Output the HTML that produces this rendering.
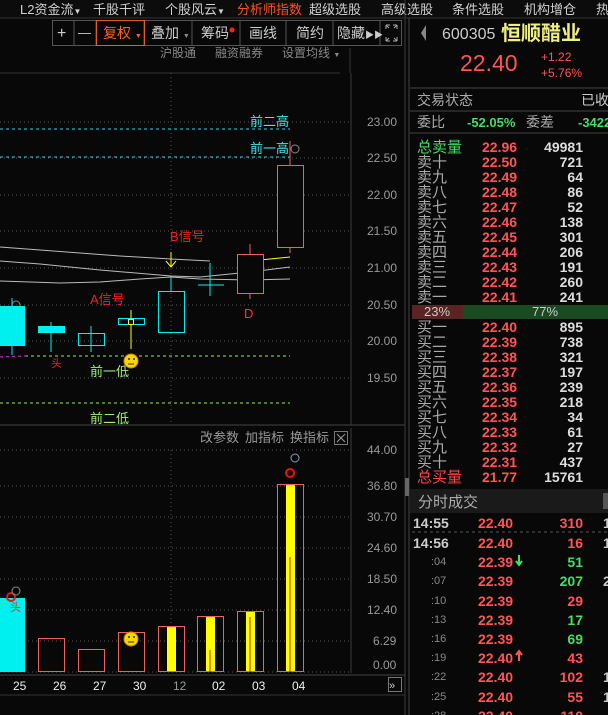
<!DOCTYPE html>
<html><head><meta charset="utf-8"><style>
html,body{margin:0;padding:0;background:#080808;width:608px;height:715px;overflow:hidden}
svg{display:block;font-family:"Liberation Sans","Noto Sans CJK SC",sans-serif}
</style></head><body>
<svg width="608" height="715" viewBox="0 0 608 715" xmlns="http://www.w3.org/2000/svg">
<rect width="608" height="715" fill="#080808"/>
<rect width="608" height="18" fill="#0c0c0c"/>
<line x1="0" y1="18" x2="608" y2="18" stroke="#333"/>
<g font-size="13" fill="#d0d0d0">
<text x="20" y="14">L2资金流<tspan font-size="8">▼</tspan></text>
<text x="93" y="14">千股千评</text>
<text x="165" y="14">个股风云<tspan font-size="8">▼</tspan></text>
<text x="237" y="14" fill="#ff5020">分析师指数</text>
<text x="309" y="14">超级选股</text>
<text x="381" y="14">高级选股</text>
<text x="452" y="14">条件选股</text>
<text x="524" y="14">机构增仓</text>
<text x="596" y="14">热</text>
</g>
<g stroke="#555" fill="none">
<rect x="52.5" y="20.5" width="349" height="25"/>
<line x1="74" y1="20" x2="74" y2="46"/><line x1="96" y1="20" x2="96" y2="46"/>
<line x1="144" y1="20" x2="144" y2="46"/><line x1="192" y1="20" x2="192" y2="46"/>
<line x1="240" y1="20" x2="240" y2="46"/><line x1="286" y1="20" x2="286" y2="46"/>
<line x1="333" y1="20" x2="333" y2="46"/><line x1="380" y1="20" x2="380" y2="46"/>
</g>
<rect x="96.5" y="20.5" width="48" height="25" fill="none" stroke="#e06020"/>
<g font-size="14" fill="#ccc">
<text x="57" y="38" font-size="16">+</text>
<text x="78" y="37" font-size="13">—</text>
<text x="103" y="38" fill="#ff6020">复权 <tspan font-size="7">▼</tspan></text>
<text x="151" y="38">叠加 <tspan font-size="7" fill="#888">▼</tspan></text>
<text x="201" y="38">筹码</text><circle cx="232" cy="30" r="2.5" fill="#f22"/>
<text x="249" y="38">画线</text>
<text x="296" y="38">简约</text>
<text x="337" y="38">隐藏<tspan font-size="9">▶▶</tspan></text>
</g>
<path d="M386 25h4M386 25v4M397 25h-4M397 25v4M386 41h4M386 41v-4M397 41h-4M397 41v-4M386 25l3 3M397 25l-3 3M386 41l3-3M397 41l-3-3" stroke="#aaa" fill="none"/>
<g font-size="12" fill="#888">
<text x="160" y="57">沪股通</text><text x="215" y="57">融资融券</text><text x="282" y="57">设置均线 <tspan font-size="7">▼</tspan></text>
</g>
<line x1="0" y1="73" x2="340" y2="73" stroke="#333"/>
<line x1="350" y1="48" x2="350" y2="73" stroke="#333"/>

<line x1="351" y1="73" x2="351" y2="425" stroke="#3a3a3a"/>
<line x1="405" y1="0" x2="405" y2="715" stroke="#3a3a3a"/>
<line x1="409" y1="18" x2="409" y2="715" stroke="#444"/>
<g stroke="#555" stroke-dasharray="1,3">
<line x1="0" y1="122" x2="351" y2="122"/><line x1="0" y1="158" x2="351" y2="158"/>
<line x1="0" y1="195" x2="351" y2="195"/><line x1="0" y1="231" x2="351" y2="231"/>
<line x1="0" y1="268" x2="351" y2="268"/><line x1="0" y1="305" x2="351" y2="305"/>
<line x1="0" y1="341" x2="351" y2="341"/><line x1="0" y1="378" x2="351" y2="378"/>
<line x1="171" y1="73" x2="171" y2="425"/>
</g>
<g font-size="12" fill="#999">
<text x="367" y="126">23.00</text><text x="367" y="162">22.50</text><text x="367" y="199">22.00</text>
<text x="367" y="235">21.50</text><text x="367" y="272">21.00</text><text x="367" y="309">20.50</text>
<text x="367" y="345">20.00</text><text x="367" y="382">19.50</text>
</g>
<g stroke-dasharray="3,3">
<line x1="0" y1="129" x2="290" y2="129" stroke="#30d0e0"/>
<line x1="0" y1="157" x2="290" y2="157" stroke="#30d0e0"/>
<line x1="25" y1="356" x2="290" y2="356" stroke="#90f060"/>
<line x1="0" y1="403" x2="290" y2="403" stroke="#90f060"/>
<line x1="0" y1="357" x2="26" y2="356" stroke="#e030e0"/>
</g>
<g font-size="13">
<text x="250" y="126" fill="#40e8f0">前二高</text>
<text x="250" y="153" fill="#40e8f0">前一高</text>
<text x="90" y="376" fill="#a0f070">前一低</text>
<text x="90" y="423" fill="#a0f070">前二低</text>
<text x="90" y="304" fill="#f02020">A信号</text>
<text x="170" y="241" fill="#f02020">B信号</text>
<text x="244" y="318" fill="#e04040">D</text>
</g>
<circle cx="295" cy="149" r="4" fill="none" stroke="#888"/>
<circle cx="16" cy="305" r="4" fill="none" stroke="#888"/>
<g fill="none" stroke="#bbb" stroke-width="1">
<polyline points="0,247 40,250 80,253 120,256 171,259 210,261"/>
<polyline points="0,261 40,264 100,270 171,276 200,277 250,272 290,267"/>
<polyline points="0,281 60,283 100,282 140,279 171,277 200,279 250,280 290,279"/>
</g>
<polyline points="250,261 270,259 290,257" fill="none" stroke="#ff0"/>
<g stroke="#00f0f0" fill="none">
<line x1="12" y1="298" x2="12" y2="355"/>
<line x1="51" y1="322" x2="51" y2="352"/>
<line x1="91" y1="326" x2="91" y2="352"/>
<line x1="171" y1="278" x2="171" y2="291"/>
<line x1="210" y1="263" x2="210" y2="296"/>
<line x1="198" y1="285" x2="224" y2="285"/>
<rect x="78.5" y="333.5" width="26" height="12"/>
<rect x="118.5" y="318.5" width="26" height="6"/>
<rect x="158.5" y="291.5" width="26" height="41"/>
</g>
<rect x="0" y="306" width="25" height="40" fill="#00f0f0"/>
<rect x="38" y="326" width="27" height="7" fill="#00f0f0"/>
<line x1="131" y1="310" x2="131" y2="349" stroke="#ff0"/>
<rect x="128.5" y="319.5" width="5" height="5" fill="#080808" stroke="#ff0"/>
<g stroke="#f06060" fill="none">
<line x1="250" y1="244" x2="250" y2="299"/>
<line x1="290" y1="141" x2="290" y2="253"/>
<rect x="237.5" y="254.5" width="26" height="39" fill="#080808"/>
<rect x="277.5" y="165.5" width="26" height="82" fill="#080808"/>
</g>
<path d="M171 252v15M166 261l5 6 5-6" stroke="#ff0" fill="none"/>
<text x="51" y="367" font-size="11" fill="#f02020">头</text>
<circle cx="131" cy="361" r="7" fill="#f8d800" stroke="#d08000"/>
<circle cx="129" cy="359" r="1" fill="#333"/><circle cx="134" cy="359" r="1" fill="#333"/>
<line x1="128" y1="364" x2="134" y2="364" stroke="#333"/>
<line x1="0" y1="425" x2="405" y2="425" stroke="#444"/>

<g font-size="13" fill="#999">
<text x="200" y="442">改参数</text><text x="245" y="442">加指标</text><text x="290" y="442">换指标</text>
</g>
<rect x="334.5" y="431.5" width="13" height="13" fill="none" stroke="#777"/>
<path d="M337 434l8 8M345 434l-8 8" stroke="#999"/>
<line x1="351" y1="428" x2="351" y2="673" stroke="#3a3a3a"/>
<g stroke="#555" stroke-dasharray="1,3">
<line x1="0" y1="450" x2="351" y2="450"/><line x1="0" y1="486" x2="351" y2="486"/>
<line x1="0" y1="517" x2="351" y2="517"/><line x1="0" y1="548" x2="351" y2="548"/>
<line x1="0" y1="579" x2="351" y2="579"/><line x1="0" y1="610" x2="351" y2="610"/>
<line x1="0" y1="641" x2="351" y2="641"/><line x1="0" y1="672" x2="351" y2="672"/>
<line x1="171" y1="450" x2="171" y2="672"/>
</g>
<g font-size="12" fill="#999">
<text x="367" y="454">44.00</text><text x="367" y="490">36.80</text><text x="367" y="521">30.70</text>
<text x="367" y="552">24.60</text><text x="367" y="583">18.50</text><text x="367" y="614">12.40</text>
<text x="373" y="645">6.29</text><text x="373" y="669">0.00</text>
</g>
<rect x="0" y="598" width="25" height="74" fill="#00f0f0"/>
<g fill="#ff0">
<rect x="167" y="626" width="9" height="46"/><rect x="206" y="616" width="9" height="56"/>
<rect x="246" y="611" width="9" height="61"/><rect x="286" y="484" width="9" height="188"/>
</g>
<g stroke="#f06060" fill="none">
<rect x="38.5" y="638.5" width="26" height="33"/><rect x="78.5" y="649.5" width="26" height="22"/>
<rect x="118.5" y="632.5" width="26" height="39"/><rect x="158.5" y="626.5" width="26" height="45"/>
<rect x="197.5" y="616.5" width="26" height="55"/><rect x="237.5" y="611.5" width="26" height="60"/>
<rect x="277.5" y="484.5" width="26" height="187"/>
</g>
<g stroke="#c02040"><line x1="210" y1="650" x2="210" y2="672"/><line x1="250" y1="617" x2="250" y2="672"/><line x1="290" y1="557" x2="290" y2="672"/></g>
<circle cx="290" cy="473" r="4" fill="none" stroke="#f01010" stroke-width="2"/>
<circle cx="295" cy="458" r="4" fill="none" stroke="#8899bb"/>
<circle cx="11" cy="597" r="4" fill="none" stroke="#f01010" stroke-width="2"/>
<circle cx="16" cy="591" r="4" fill="none" stroke="#888"/>
<text x="10" y="611" font-size="11" fill="#f02020">头</text>
<circle cx="131" cy="639" r="7" fill="#f8d800" stroke="#d08000"/>
<circle cx="129" cy="637" r="1" fill="#333"/><circle cx="134" cy="637" r="1" fill="#333"/>
<line x1="128" y1="642" x2="134" y2="642" stroke="#333"/>
<line x1="0" y1="675" x2="405" y2="675" stroke="#444"/>
<g font-size="12" fill="#eee">
<text x="13" y="690">25</text><text x="53" y="690">26</text><text x="93" y="690">27</text>
<text x="133" y="690">30</text><text x="173" y="690" fill="#999">12</text><text x="212" y="690">02</text>
<text x="252" y="690">03</text><text x="292" y="690">04</text>
</g>
<rect x="388.5" y="677.5" width="13" height="14" fill="none" stroke="#777"/>
<text x="389" y="689" font-size="11" fill="#ccc">»</text>
<line x1="0" y1="695" x2="405" y2="695" stroke="#333"/>
<rect x="405" y="478" width="4" height="18" fill="#666"/>

<path d="M426 25l-5 8 5 8z" fill="#888"/>
<text x="442" y="39" font-size="16" fill="#ccc">600305</text>
<text x="501" y="40" font-size="20" font-weight="bold" fill="#f0f080">恒顺醋业</text>
<text x="460" y="71" font-size="23" fill="#ff5555">22.40</text>
<text x="541" y="61" font-size="12" fill="#ff5555">+1.22</text>
<text x="541" y="77" font-size="12" fill="#ff5555">+5.76%</text>
<line x1="410" y1="88" x2="608" y2="88" stroke="#444"/>
<text x="417" y="105" font-size="14" fill="#aaa">交易状态</text>
<text x="581" y="105" font-size="14" fill="#ccc">已收</text>
<line x1="410" y1="111" x2="608" y2="111" stroke="#444"/>
<text x="417" y="127" font-size="14" fill="#aaa">委比</text>
<text x="467" y="127" font-size="13" font-weight="bold" fill="#44dd66">-52.05%</text>
<text x="526" y="127" font-size="14" fill="#aaa">委差</text>
<text x="578" y="127" font-size="13" font-weight="bold" fill="#44dd66">-3422</text>
<line x1="410" y1="133" x2="608" y2="133" stroke="#444"/>
<g font-size="15" fill="#aaa">
<text x="417" y="152" fill="#44dd66">总卖量</text>
<text x="417" y="167">卖十</text><text x="417" y="182">卖九</text><text x="417" y="197">卖八</text>
<text x="417" y="212">卖七</text><text x="417" y="227">卖六</text><text x="417" y="242">卖五</text>
<text x="417" y="257">卖四</text><text x="417" y="272">卖三</text><text x="417" y="287">卖二</text><text x="417" y="302">卖一</text>
<text x="417" y="332">买一</text><text x="417" y="347">买二</text><text x="417" y="362">买三</text>
<text x="417" y="377">买四</text><text x="417" y="392">买五</text><text x="417" y="407">买六</text>
<text x="417" y="422">买七</text><text x="417" y="437">买八</text><text x="417" y="452">买九</text><text x="417" y="467">买十</text>
<text x="417" y="482" fill="#ff4444">总买量</text>
</g>
<g font-size="14" font-weight="bold" fill="#ff5555">
<text x="482" y="152">22.96</text><text x="482" y="167">22.50</text><text x="482" y="182">22.49</text>
<text x="482" y="197">22.48</text><text x="482" y="212">22.47</text><text x="482" y="227">22.46</text>
<text x="482" y="242">22.45</text><text x="482" y="257">22.44</text><text x="482" y="272">22.43</text>
<text x="482" y="287">22.42</text><text x="482" y="302">22.41</text>
<text x="482" y="332">22.40</text><text x="482" y="347">22.39</text><text x="482" y="362">22.38</text>
<text x="482" y="377">22.37</text><text x="482" y="392">22.36</text><text x="482" y="407">22.35</text>
<text x="482" y="422">22.34</text><text x="482" y="437">22.33</text><text x="482" y="452">22.32</text>
<text x="482" y="467">22.31</text><text x="482" y="482">21.77</text>
</g>
<g font-size="14" font-weight="bold" fill="#ddd" text-anchor="end">
<text x="583" y="152">49981</text><text x="583" y="167">721</text><text x="583" y="182">64</text>
<text x="583" y="197">86</text><text x="583" y="212">52</text><text x="583" y="227">138</text>
<text x="583" y="242">301</text><text x="583" y="257">206</text><text x="583" y="272">191</text>
<text x="583" y="287">260</text><text x="583" y="302">241</text>
<text x="583" y="332">895</text><text x="583" y="347">738</text><text x="583" y="362">321</text>
<text x="583" y="377">197</text><text x="583" y="392">239</text><text x="583" y="407">218</text>
<text x="583" y="422">34</text><text x="583" y="437">61</text><text x="583" y="452">27</text>
<text x="583" y="467">437</text><text x="583" y="482">15761</text>
</g>
<rect x="412" y="305" width="51" height="14" fill="#5a2424"/>
<rect x="463" y="305" width="145" height="14" fill="#1a4a22"/>
<text x="437" y="316" font-size="13" fill="#ccc" text-anchor="middle">23%</text>
<text x="545" y="316" font-size="13" fill="#ccc" text-anchor="middle">77%</text>
<rect x="410" y="489" width="198" height="24" fill="#1a1a1a"/>
<text x="418" y="507" font-size="15" fill="#aaa">分时成交</text>
<rect x="603" y="493" width="5" height="16" fill="#555"/>
<line x1="412" y1="532" x2="608" y2="532" stroke="#555" stroke-dasharray="3,3"/>
<g font-size="14" font-weight="bold">
<text x="413" y="528" fill="#ccc">14:55</text>
<text x="413" y="548" fill="#ccc">14:56</text>
<g fill="#888" font-size="11" font-weight="normal"><text x="431" y="565">:04</text><text x="431" y="584">:07</text><text x="431" y="604">:10</text><text x="431" y="623">:13</text><text x="431" y="642">:16</text><text x="431" y="661">:19</text><text x="431" y="680">:22</text><text x="431" y="700">:25</text><text x="431" y="719">:28</text></g>
<g fill="#ff5555"><text x="478" y="528">22.40</text><text x="478" y="548">22.40</text><text x="478" y="567">22.39</text><text x="478" y="586">22.39</text><text x="478" y="606">22.39</text><text x="478" y="625">22.39</text><text x="478" y="644">22.39</text><text x="478" y="663">22.40</text><text x="478" y="682">22.40</text><text x="478" y="702">22.40</text><text x="478" y="721">22.40</text></g>
<g text-anchor="end"><text x="583" y="528" fill="#ff5555">310</text><text x="583" y="548" fill="#ff5555">16</text><text x="583" y="567" fill="#44dd66">51</text><text x="583" y="586" fill="#44dd66">207</text><text x="583" y="606" fill="#ff5555">29</text><text x="583" y="625" fill="#44dd66">17</text><text x="583" y="644" fill="#44dd66">69</text><text x="583" y="663" fill="#ff5555">43</text><text x="583" y="682" fill="#ff5555">102</text><text x="583" y="702" fill="#ff5555">55</text><text x="583" y="721" fill="#ff5555">110</text></g>
<g fill="#ccc"><text x="603" y="528">1</text><text x="603" y="548">1</text><text x="603" y="586">2</text><text x="603" y="682">1</text><text x="603" y="702">1</text></g>
</g>
<path d="M519 555v9M516 561l3 4 3-4" stroke="#44dd66" stroke-width="2" fill="none"/>
<path d="M519 661v-9M516 655l3-4 3 4" stroke="#ff5555" stroke-width="2" fill="none"/>
</svg>
</body></html>
